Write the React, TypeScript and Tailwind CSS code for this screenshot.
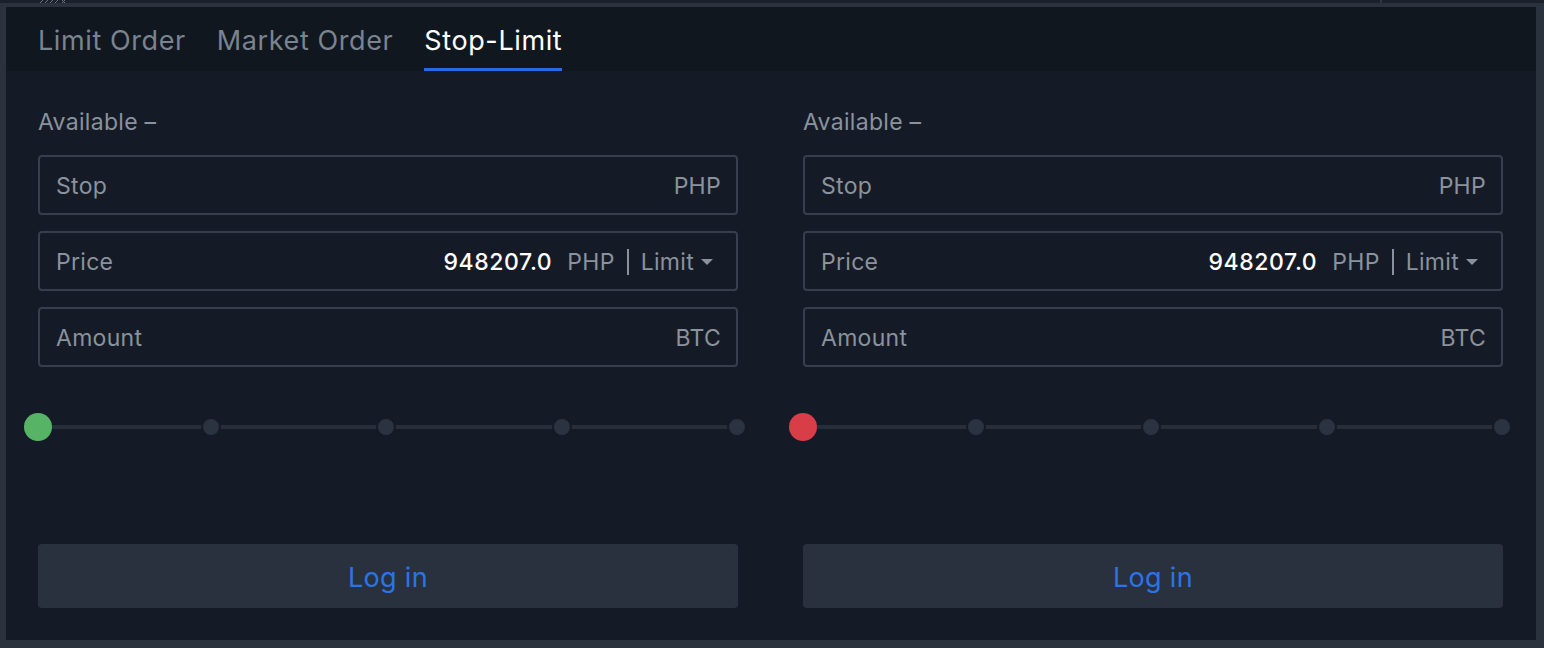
import React from 'react';

type Side = 'buy' | 'sell';

const font = { fontFamily: 'Inter, "Noto Sans", "Liberation Sans", sans-serif' };

function Field({ label, unit, price }: { label: string; unit: string; price?: boolean }) {
  return (
    <div className="flex h-[60px] items-center rounded-[4px] border-2 border-[#363f4b] pl-[16px] pr-[15px] pt-[2px] text-[23px] tracking-[0.3px]">
      <span className="flex-1 text-[#8a929d]">{label}</span>
      {price ? (
        <div className="flex items-center">
          <span className="font-medium tracking-[0.6px] text-white">948207.0</span>
          <span className="ml-[15px] text-[#8a929d]">PHP</span>
          <span className="mx-[12px] h-[26px] w-[2px] bg-[#8a929d]" />
          <span className="text-[#8a929d]">Limit</span>
          <svg className="ml-[7px] mr-[8px]" width="12" height="6" viewBox="0 0 12 6">
            <path d="M0 0h12L6 6z" fill="#8a929d" />
          </svg>
        </div>
      ) : (
        <span className="text-[#8a929d]">{unit}</span>
      )}
    </div>
  );
}

function Slider({ side }: { side: Side }) {
  const stops = [25, 50, 75, 100];
  return (
    <div className="relative -ml-[3px] h-[28px] w-[702px]">
      <div className="absolute left-[3px] right-0 top-[12px] h-[4px] bg-[#252e39]" />
      {stops.map((p) => (
        <span
          key={p}
          className="absolute top-[4px] h-[20px] w-[20px] -translate-x-1/2 rounded-full border-2 border-[#151b26] bg-[#2a333f]"
          style={{ left: `${p}%` }}
        />
      ))}
      <span
        className={`absolute left-[3px] top-0 h-[28px] w-[28px] -translate-x-1/2 rounded-full ${
          side === 'buy' ? 'bg-[#57b466]' : 'bg-[#d93d47]'
        }`}
      />
    </div>
  );
}

function OrderForm({ side }: { side: Side }) {
  return (
    <div className="flex flex-col">
      <div className="h-[24px] text-[23px] leading-[24px] tracking-[0.3px] text-[#8a929d]">Available –</div>
      <div className="mt-[21px] flex flex-col gap-[16px]">
        <Field label="Stop" unit="PHP" />
        <Field label="Price" unit="PHP" price />
        <Field label="Amount" unit="BTC" />
      </div>
      <div className="mt-[46px]">
        <Slider side={side} />
      </div>
      <button className="mt-[103px] flex h-[64px] items-center justify-center rounded-[4px] bg-[#28313d] pt-[5px] text-[27px] tracking-[0.3px] text-[#2c74e6]">
        Log in
      </button>
    </div>
  );
}

export default function App() {
  const tabs = ['Limit Order', 'Market Order', 'Stop-Limit'];
  const active = 'Stop-Limit';

  return (
    <div className="h-[648px] w-[1544px] overflow-hidden bg-[#29323d]" style={font}>
      {/* strip of the panel above */}
      <div className="relative flex h-[3px] overflow-hidden bg-[#1a212b]">
        <svg className="ml-[38px]" width="40" height="3" viewBox="0 0 40 3">
          <path d="M2 3l3-3M7 3l3-3M12 3l3-3M17 3l3-3" stroke="#6b7380" strokeWidth="1" />
          <path d="M24 0l3 3M27 0l-3 3" stroke="#6b7380" strokeWidth="1" />
        </svg>
        <span className="ml-auto mr-[162px] w-[2px] bg-[#2d3641]" />
      </div>
      <div className="ml-[6px] mr-[8px] mt-[4px] flex h-[633px] flex-col">
        {/* tabs */}
        <div className="flex h-[64px] items-stretch gap-[31px] bg-[#10171f] pl-[32px]">
          {tabs.map((t) => (
            <div
              key={t}
              className={`flex items-center border-b-[3px] pt-[7px] text-[27px] tracking-[0.6px] ${
                t === active ? 'border-[#2a6ae0] text-white' : 'border-transparent text-[#7b838f]'
              }`}
            >
              {t}
            </div>
          ))}
        </div>
        <div className="grid flex-1 grid-cols-2 gap-[65px] bg-[#151b26] pl-[32px] pr-[33px] pt-[39px]">
          <OrderForm side="buy" />
          <OrderForm side="sell" />
        </div>
      </div>
    </div>
  );
}
